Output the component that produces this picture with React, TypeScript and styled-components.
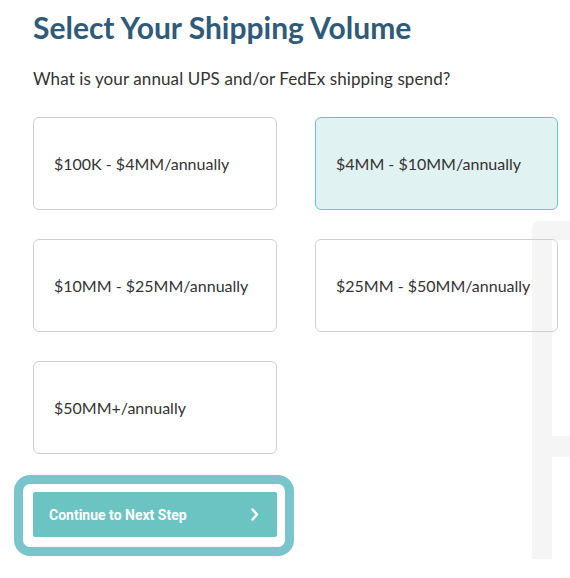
import React, { useState } from "react";
import styled, { createGlobalStyle } from "styled-components";

const GlobalStyle = createGlobalStyle`
  body {
    margin: 0;
    background: #fff;
    font-family: Lato, "Liberation Sans", Arial, sans-serif;
  }
`;

const options = [
  "$100K - $4MM/annually",
  "$4MM - $10MM/annually",
  "$10MM - $25MM/annually",
  "$25MM - $50MM/annually",
  "$50MM+/annually",
];

const App = () => {
  const [selected, setSelected] = useState(1);
  return (
    <Page>
      <GlobalStyle />
      <Backdrop>
        <BackdropTop />
        <BackdropBar />
        <BackdropNotch />
      </Backdrop>
      <Content>
        <Title>Select Your Shipping Volume</Title>
        <Question>What is your annual UPS and/or FedEx shipping spend?</Question>
        <OptionGrid>
          {options.map((label, i) => (
            <OptionCard
              key={label}
              $active={selected === i}
              onClick={() => setSelected(i)}
            >
              {label}
            </OptionCard>
          ))}
        </OptionGrid>
        <FocusRing>
          <NextButton>
            Continue to Next Step
            <svg width="8" height="13" viewBox="0 0 8 13">
              <path
                d="M1.5 1.5 L6 6.5 L1.5 11.5"
                fill="none"
                stroke="#fff"
                strokeWidth="2.4"
                strokeLinecap="round"
                strokeLinejoin="round"
              />
            </svg>
          </NextButton>
        </FocusRing>
      </Content>
    </Page>
  );
};

export default App;

const Page = styled.div`
  position: relative;
  width: 570px;
  height: 578px;
  overflow: hidden;
`;

/* grey panel peeking from behind the form */
const Backdrop = styled.div`
  position: absolute;
  left: 532px;
  top: 221px;
  width: 38px;
  height: 338px;
  z-index: 0;
`;

const BackdropTop = styled.div`
  height: 19px;
  background: #f5f5f5;
  border-top-left-radius: 8px;
`;

const BackdropBar = styled.div`
  width: 20px;
  height: 319px;
  background: #f5f5f5;
`;

const BackdropNotch = styled.div`
  position: absolute;
  left: 20px;
  top: 215px;
  width: 18px;
  height: 21px;
  background: #f5f5f5;
`;

const Content = styled.div`
  position: relative;
  z-index: 1;
  padding: 8px 0 0 33px;
`;

const Title = styled.h1`
  margin: 0;
  font-size: 30px;
  line-height: 38px;
  font-weight: 700;
  color: #2f5a78;
`;

const Question = styled.p`
  margin: 23px 0 0;
  font-size: 17px;
  line-height: 20px;
  letter-spacing: 0.1px;
  color: #333;
`;

const OptionGrid = styled.div`
  display: grid;
  grid-template-columns: 244px 243px;
  column-gap: 38px;
  row-gap: 29px;
  margin-top: 28px;
`;

const OptionCard = styled.div<{ $active: boolean }>`
  box-sizing: border-box;
  height: 93px;
  display: flex;
  align-items: center;
  padding-left: 20px;
  border: 1px solid ${(p) => (p.$active ? "#6cc6c3" : "#cfcfcf")};
  border-radius: 6px;
  background: ${(p) => (p.$active ? "#e0f2f1" : "transparent")};
  font-size: 16px;
  color: #333;
  cursor: pointer;
`;

const FocusRing = styled.div`
  display: inline-block;
  margin: 21px 0 0 -19px;
  padding: 8px 8px 10px 10px;
  border: 9px solid #78c5cc;
  border-radius: 16px;
`;

const NextButton = styled.button`
  box-sizing: border-box;
  width: 244px;
  height: 45px;
  display: flex;
  align-items: center;
  justify-content: space-between;
  padding: 0 18px 0 16px;
  border: none;
  border-radius: 2px;
  background: #6bc4c2;
  color: #fff;
  font-family: Roboto, "Liberation Sans", sans-serif;
  font-size: 14px;
  font-weight: 700;
  cursor: pointer;
`;
